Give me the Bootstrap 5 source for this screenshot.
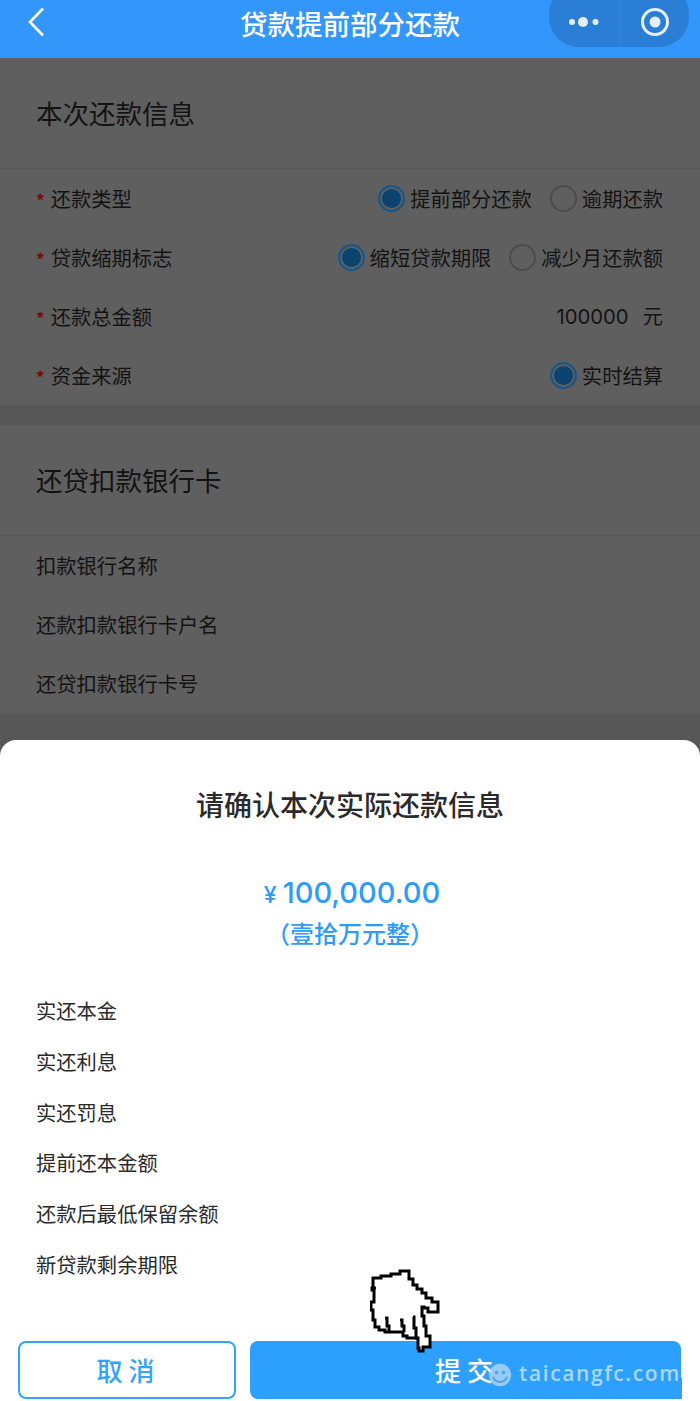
<!DOCTYPE html>
<html lang="zh-CN">
<head>
    <meta charset="UTF-8">
    <title>贷款提前部分还款</title>
    <link href="https://cdn.jsdelivr.net/npm/bootstrap@5.3.2/dist/css/bootstrap.min.css" rel="stylesheet">
    <style>
        html, body { height: 1401px; overflow: hidden; }
        body {
            background-color: #575757;
            color: #131313;
            font-family: "Noto Sans CJK SC", "Liberation Sans", sans-serif;
            position: relative;
        }
        /* barra superior */
        .top-bar { height: 58px; background: #3296fa; color: #fff; position: relative; }
        .top-title { font-size: 27.5px; line-height: 46px; font-weight: 500; }
        .back-btn { position: absolute; left: 27px; top: 7px; }
        .capsule {
            position: absolute; right: 11px; top: -16px; width: 140px; height: 63px;
            background: #2a7ed6; border-radius: 30px; padding-top: 14px;
        }
        .capsule-part { width: 70px; height: 48px; }
        .capsule-part + .capsule-part { border-left: 1px solid #2f86de; }
        /* secciones */
        .info-block { background: #5f5f5f; }
        .block-gap { height: 20px; }
        .block-title { height: 111px; padding: 0 36px; font-size: 26.5px; border-bottom: 1px solid #575757; font-weight: 400; }
        .info-row { height: 59px; padding: 0 37px 0 36px; font-size: 20.3px; }
        .req { color: #7d0606; margin-right: 6px; font-size: 17px; font-weight: 700; }
        .num-val { font-family: Inter, "Liberation Sans", sans-serif; margin-right: 5px; }
        .radio-dot {
            width: 27px; height: 27px; border-radius: 50%; border: 2px solid #4c4c4c;
            margin-right: 5px; margin-left: 18px; flex: none;
        }
        .radio-dot.on { border-color: #14588f; box-shadow: inset 0 0 0 2px #5f5f5f; background: #0a4270; }
        /* hoja inferior */
        .sheet {
            position: absolute; left: 0; right: 0; top: 740px; height: 661px;
            background: #fff; border-radius: 16px 16px 0 0; color: #2a2a2a;
        }
        .sheet-title { padding-top: 45px; height: 130px; font-size: 28px; line-height: 38px; font-weight: 500; text-align: center; }
        .amount { color: #2d9bf8; font-family: Inter, "Liberation Sans", sans-serif; font-size: 29px; font-weight: 500; line-height: 46px; padding-left: 4px; }
        .amount small { font-size: 23px; margin-right: 6px; font-weight: 500; }
        .amount-cn { color: #2d9bf8; font-size: 24px; line-height: 29px; font-weight: 500; }
        .sheet-list { padding: 38px 36px 0; font-size: 20.3px; }
        .sheet-list div { height: 50.8px; line-height: 50.8px; }
        .sheet-btns { position: absolute; left: 18px; right: 19px; top: 601px; }
        .btn-cancel, .btn-send {
            height: 58px; border-radius: 8px; font-size: 26px; font-weight: 500;
            letter-spacing: 6px; padding: 0 0 2px 3px;
        }
        .btn-cancel { width: 218px; margin-right: 14px; color: #33a3fb; border: 2px solid #33a3fb; background: #fff; }
        .btn-send { flex: 1; color: #fff; background: #2d9ffc; border: 0; border-radius: 8px 8px 0 8px; }
        .btn-cancel:hover { color: #33a3fb; background: #fff; border-color: #33a3fb; }
        /* puntero y marca de agua */
        .hand { position: absolute; left: 370px; top: 1266px; }
        .wm-text { position: absolute; left: 488px; top: 1355px; color: rgba(255,255,255,.6); font-family: "Open Sans", sans-serif; font-size: 21px; font-weight: 600; letter-spacing: 1.6px; line-height: 36px; white-space: nowrap; }
        .wm-text svg { margin-right: 7px; vertical-align: -6px; }
        .edge-line { position: absolute; left: 681px; top: 1378px; width: 1px; height: 21px; background: #21d321; }
    </style>
</head>
<body>

<div class="top-bar text-center">
    <svg class="back-btn" width="18" height="30" viewBox="0 0 18 30" fill="none" stroke="#fff" stroke-width="2.6"><path d="M16 1.500 3 15l13 13.500"/></svg>
    <div class="top-title">贷款提前部分还款</div>
    <div class="capsule d-flex">
        <div class="capsule-part d-flex align-items-center justify-content-center gap-1">
            <svg width="32" height="12" viewBox="0 0 32 12" fill="#e6eef8"><circle cx="4" cy="6" r="3"/><circle cx="15" cy="6" r="5"/><circle cx="27.500" cy="6" r="3"/></svg>
        </div>
        <div class="capsule-part d-flex align-items-center justify-content-center">
            <svg width="30" height="30" viewBox="0 0 30 30"><circle cx="15" cy="15" r="12.500" fill="none" stroke="#e6eef8" stroke-width="3"/><circle cx="15" cy="15" r="5.500" fill="#e6eef8"/></svg>
        </div>
    </div>
</div>

<div class="info-block">
    <div class="block-title d-flex align-items-center">本次还款信息</div>
    <div class="info-row d-flex align-items-center justify-content-between">
        <div><span class="req">*</span>还款类型</div>
        <div class="d-flex align-items-center"><span class="radio-dot on"></span>提前部分还款<span class="radio-dot"></span>逾期还款</div>
    </div>
    <div class="info-row d-flex align-items-center justify-content-between">
        <div><span class="req">*</span>贷款缩期标志</div>
        <div class="d-flex align-items-center"><span class="radio-dot on"></span>缩短贷款期限<span class="radio-dot"></span>减少月还款额</div>
    </div>
    <div class="info-row d-flex align-items-center justify-content-between">
        <div><span class="req">*</span>还款总金额</div>
        <div><span class="num-val">100000</span>&nbsp; 元</div>
    </div>
    <div class="info-row d-flex align-items-center justify-content-between">
        <div><span class="req">*</span>资金来源</div>
        <div class="d-flex align-items-center"><span class="radio-dot on"></span>实时结算</div>
    </div>
</div>
<div class="block-gap"></div>
<div class="info-block">
    <div class="block-title d-flex align-items-center">还贷扣款银行卡</div>
    <div class="info-row d-flex align-items-center">扣款银行名称</div>
    <div class="info-row d-flex align-items-center">还款扣款银行卡户名</div>
    <div class="info-row d-flex align-items-center">还贷扣款银行卡号</div>
</div>

<div class="sheet">
    <div class="sheet-title">请确认本次实际还款信息</div>
    <div class="text-center">
        <div class="amount"><small>¥</small>100,000.00</div>
        <div class="amount-cn">（壹拾万元整）</div>
    </div>
    <div class="sheet-list">
        <div>实还本金</div>
        <div>实还利息</div>
        <div>实还罚息</div>
        <div>提前还本金额</div>
        <div>还款后最低保留余额</div>
        <div>新贷款剩余期限</div>
    </div>
    <div class="sheet-btns d-flex">
        <button type="button" class="btn btn-cancel">取消</button>
        <button type="button" class="btn btn-send">提交</button>
    </div>
</div>
<div class="edge-line"></div>

<svg class="hand" width="72" height="90" viewBox="0 0 72 90">
    <path d="M3 12H11V10H21V8H30V5H39V13H43V19H47V23H52V27H56V32H62V36H68V46H58V42H54V41H52V50H54V60H56V70H60V81H53V85H49V82H48V72H45H37V70H33V66H25V66H15V64H9V61H5V54H3V44H1V36H4V24H2V22H6H3Z" fill="#fff" stroke="#000" stroke-width="3" stroke-linejoin="miter"/>
    <path d="M15 52H17V60H19V66M30 54H32V60H34V66M43 51H44V62H46V72H48" fill="none" stroke="#000" stroke-width="3"/>
</svg>

<div class="wm-text"><svg width="24" height="24" viewBox="0 0 28 28"><circle cx="14" cy="14" r="13" fill="#cfe4f8" fill-opacity=".65"/><circle cx="10" cy="11" r="2" fill="#4f9fe6"/><circle cx="18" cy="11" r="2" fill="#4f9fe6"/><path d="M6 16c2 8 14 8 16 0" fill="none" stroke="#4f9fe6" stroke-width="2"/></svg>taicangfc.com</div>

<script src="https://cdn.jsdelivr.net/npm/bootstrap@5.3.2/dist/js/bootstrap.bundle.min.js"></script>
</body>
</html>
